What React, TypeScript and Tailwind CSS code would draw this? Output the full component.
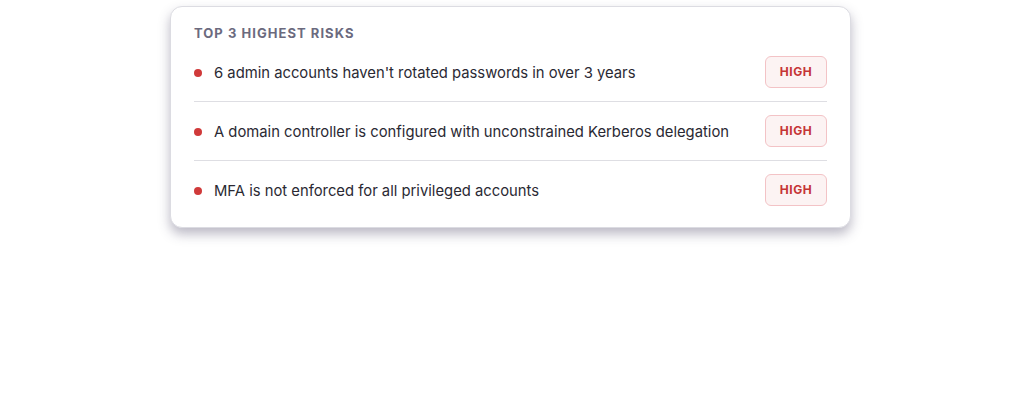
const risks = [
  "6 admin accounts haven't rotated passwords in over 3 years",
  'A domain controller is configured with unconstrained Kerberos delegation',
  'MFA is not enforced for all privileged accounts',
];

export default function App() {
  return (
    <div className="w-[1024px] h-[397px] bg-white pt-[6px]" style={{ fontFamily: 'Inter, "Noto Sans", sans-serif' }}>
      <div className="ml-[170px] w-[681px] rounded-xl border border-[#dcdce2] bg-white pt-[18px] pb-2 px-[23px] shadow-[0_6px_12px_rgba(60,55,90,0.35)]">
        <h2 className="text-[13px] leading-4 font-bold tracking-[0.08em] text-[#6b6a7e] uppercase mb-[2px]">
          Top 3 Highest Risks
        </h2>
        <ul>
          {risks.map((text, i) => (
            <li
              key={i}
              className={`flex items-center justify-between py-[13px] ${i < risks.length - 1 ? 'border-b border-[#dedee3]' : ''}`}
            >
              <div className="flex items-center gap-3 pt-[2px]">
                <span className="w-2 h-2 rounded-full bg-[#d03a3a]"></span>
                <span className="text-[14.8px] text-[#2a2933]">{text}</span>
              </div>
              <span className="w-[62px] h-8 flex items-center justify-center rounded-md border border-[#f3c3c6] bg-[#fcf3f3] text-[12px] font-bold tracking-[0.05em] text-[#c53535]">
                HIGH
              </span>
            </li>
          ))}
        </ul>
      </div>
    </div>
  );
}
